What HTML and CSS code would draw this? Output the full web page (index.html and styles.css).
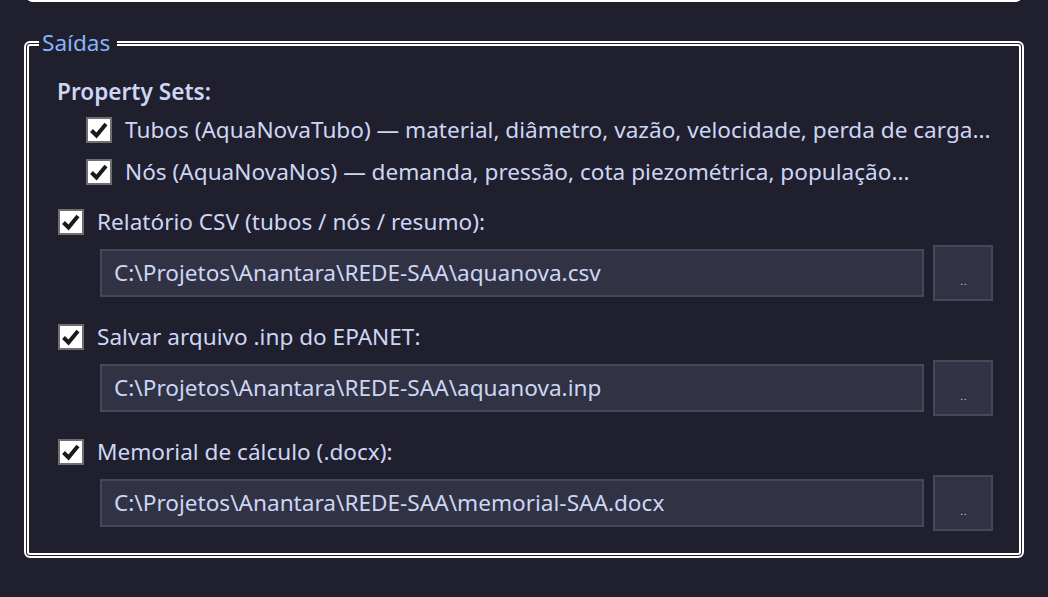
FILE: index.html
```html
<!DOCTYPE html>
<html lang="pt">
<head>
<meta charset="utf-8">
<title>Saídas</title>
<link rel="stylesheet" href="styles.css">
</head>
<body>
<div class="prev-group"></div>
<fieldset class="group">
  <legend class="group-title">Saídas</legend>
  <div class="section-label">Property Sets:</div>
  <label class="check sub first-sub">
    <span class="box"><svg viewBox="0 0 22 22" width="22" height="22"><path d="M3.5 11.5 L8.5 16.5 L18 5" /></svg></span>
    <span class="text">Tubos (AquaNovaTubo) — material, diâmetro, vazão, velocidade, perda de carga...</span>
  </label>
  <label class="check sub second-sub">
    <span class="box"><svg viewBox="0 0 22 22" width="22" height="22"><path d="M3.5 11.5 L8.5 16.5 L18 5" /></svg></span>
    <span class="text">Nós (AquaNovaNos) — demanda, pressão, cota piezométrica, população...</span>
  </label>
  <label class="check main first-main">
    <span class="box"><svg viewBox="0 0 22 22" width="22" height="22"><path d="M3.5 11.5 L8.5 16.5 L18 5" /></svg></span>
    <span class="text">Relatório CSV (tubos / nós / resumo):</span>
  </label>
  <div class="file-row">
    <div class="path">C:\Projetos\Anantara\REDE-SAA\aquanova.csv</div>
    <button class="browse" type="button"><span class="dots">..</span></button>
  </div>
  <label class="check main">
    <span class="box"><svg viewBox="0 0 22 22" width="22" height="22"><path d="M3.5 11.5 L8.5 16.5 L18 5" /></svg></span>
    <span class="text">Salvar arquivo .inp do EPANET:</span>
  </label>
  <div class="file-row">
    <div class="path">C:\Projetos\Anantara\REDE-SAA\aquanova.inp</div>
    <button class="browse" type="button"><span class="dots">..</span></button>
  </div>
  <label class="check main">
    <span class="box"><svg viewBox="0 0 22 22" width="22" height="22"><path d="M3.5 11.5 L8.5 16.5 L18 5" /></svg></span>
    <span class="text">Memorial de cálculo (.docx):</span>
  </label>
  <div class="file-row">
    <div class="path">C:\Projetos\Anantara\REDE-SAA\memorial-SAA.docx</div>
    <button class="browse" type="button"><span class="dots">..</span></button>
  </div>
</fieldset>
</body>
</html>
```

FILE: styles.css
```css
html, body {
  margin: 0;
  padding: 0;
  background: #1f1f2e;
  height: 100%;
  overflow: hidden;
}

body {
  font-family: "Noto Sans", "Open Sans", sans-serif;
  color: #cdd6f4;
  font-size: 22.6px;
}

.prev-group {
  margin: -12px 27px 0 27px;
  height: 12px;
  border: 2px solid #ffffff;
  border-top: none;
  border-radius: 0 0 5px 5px;
}

.group {
  margin: 28px 24px 0 24px;
  border: 5px double #ffffff;
  border-radius: 6px;
  padding: 24px 26px 22px 28px;
  display: flex;
  flex-direction: column;
  min-width: 0;
}

.group-title {
  color: #89b4fa;
  font-size: 22.6px;
  line-height: 26px;
  padding: 0 7px 0 3px;
  margin-left: -18px;
}

.section-label {
  font-weight: 600;
  line-height: 24px;
  height: 24px;
}

.check {
  display: flex;
  align-items: center;
  gap: 13px;
  height: 26px;
  line-height: 26px;
  white-space: nowrap;
}

.check.sub { padding-left: 29px; }
.check.main { padding-left: 1px; margin-top: 23px; }
.first-sub { margin-top: 13px; }
.second-sub { margin-top: 16px; }
.check.first-main { margin-top: 24px; }

.box {
  box-sizing: border-box;
  width: 26px;
  height: 26px;
  flex: none;
  background: #ffffff;
  border: 2px solid #6e6e73;
  display: flex;
  align-items: center;
  justify-content: center;
}

.box path {
  fill: none;
  stroke: #1a1a1a;
  stroke-width: 4;
  stroke-linecap: butt;
  stroke-linejoin: miter;
}

.file-row {
  display: flex;
  align-items: center;
  gap: 9px;
  margin-top: 10px;
  padding-left: 43px;
  height: 56px;
}

.path {
  flex: 1;
  box-sizing: border-box;
  height: 48px;
  background: #313244;
  border: 2px solid #45475a;
  padding: 0 12px;
  line-height: 44px;
  white-space: nowrap;
  overflow: hidden;
}

.browse {
  box-sizing: border-box;
  width: 60px;
  height: 56px;
  flex: none;
  background: #313244;
  border: 2px solid #45475a;
  color: #e6ecff;
  font-family: inherit;
  padding: 16px 0 0 2px;
  font-size: 9px;
  line-height: 9px;
  letter-spacing: 1px;
}
```
